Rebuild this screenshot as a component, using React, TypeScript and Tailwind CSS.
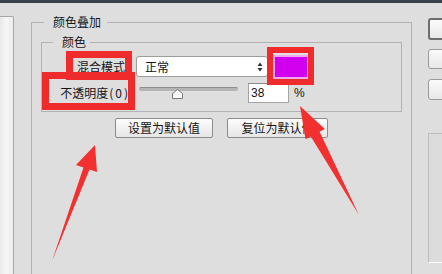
import React from "react";

function UpDown() {
  return (
    <svg width="6" height="10" viewBox="0 0 6 10">
      <path d="M3 0.5 L5.5 4 H0.5 Z M3 9.5 L5.5 6 H0.5 Z" fill="#333" />
    </svg>
  );
}

function Thumb() {
  return (
    <svg width="11" height="10" viewBox="0 0 11 10">
      <path d="M5.5 0.5 L10.5 4.5 V9.5 H0.5 V4.5 Z" fill="#fafafa" stroke="#7a7a7a" strokeWidth="1" />
    </svg>
  );
}

function Arrows() {
  return (
    <svg className="absolute inset-0" width="442" height="274" viewBox="0 0 442 274">
      <polygon
        points="95,145 97,172 89.5,169.5 52,261 83.5,167.5 76,165"
        fill="#f2302f"
      />
      <polygon
        points="300,106 324.9,128.9 319.6,131.7 359,215 310.8,136.5 305.5,139.3"
        fill="#f2302f"
      />
    </svg>
  );
}

export default function App() {
  return (
    <div className="relative w-[442px] h-[274px] overflow-hidden bg-[#dedede] font-['Noto_Sans_CJK_SC','Liberation_Sans',sans-serif] text-[12px] leading-[16px] text-[#151515]">
      <div className="h-[3px] bg-[#38404a]" />
      <div className="flex items-start">
        {/* left panel */}
        <div className="shrink-0 mt-[13px] w-[14px] h-[262px] rounded-tr-[2px] border-r border-t border-[#a8a8a8] bg-gradient-to-r from-[#e9e9e9] via-[#f6f6f6] to-[#ececec]" />

        {/* outer group */}
        <fieldset className="shrink-0 ml-[17px] mt-[11px] w-[381px] h-[290px] border border-[#b2b2b2]">
          <legend className="ml-[12px] pl-[9px] pr-[6px]">颜色叠加</legend>

          <fieldset className="mt-[4px] ml-[9px] w-[361px] border border-[#b2b2b2] pb-[8px]">
            <legend className="ml-[11px] pl-[9px] pr-[4px]">颜色</legend>

            {/* row 1 */}
            <div className="mt-[5px] flex h-[23px] items-center">
              <div className="w-[84px] pr-[1px] text-right">混合模式</div>
              <div className="ml-[10px] flex h-[21px] w-[132px] items-center justify-between rounded-[3px] border border-[#9c9c9c] bg-white pl-[8px] pr-[4px]">
                <span>正常</span>
                <UpDown />
              </div>
              <div className="ml-[5px] h-[24px] w-[36px] border-2 border-[#f2a6ee] bg-[#d000ee]" />
            </div>

            {/* row 2 */}
            <div className="mt-[5px] flex h-[20px] items-center">
              <div className="w-[86px] whitespace-nowrap text-right">
                不透明度<span className="ml-[1px] tracking-[2px]">(0</span>)
              </div>
              <div className="relative ml-[11px] h-[20px] w-[99px]">
                <div className="absolute left-0 right-0 top-[4px] h-[4px] rounded-full border-t border-[#8e8e8e] bg-[#b5b5b5]" />
                <div className="absolute left-[33px] top-[6px] leading-none">
                  <Thumb />
                </div>
              </div>
              <div className="ml-[10px] flex h-[20px] w-[41px] items-center border border-[#a4a4a4] border-t-[#8a8a8a] bg-white pl-[2px] font-['Liberation_Sans',sans-serif]">
                38
              </div>
              <div className="ml-[5px] font-['Liberation_Sans',sans-serif]">%</div>
            </div>
          </fieldset>

          {/* buttons */}
          <div className="mt-[6px] flex">
            <div className="ml-[83px] flex h-[20px] w-[98px] items-center justify-center rounded-[2px] border border-[#8c8c8c] bg-gradient-to-b from-[#fdfdfd] to-[#e6e6e6]">
              设置为默认值
            </div>
            <div className="ml-[14px] flex h-[20px] w-[101px] items-center justify-center rounded-[2px] border border-[#8c8c8c] bg-gradient-to-b from-[#fdfdfd] to-[#e6e6e6]">
              复位为默认值
            </div>
          </div>
        </fieldset>

        {/* right column */}
        <div className="ml-[16px] mt-[15px] flex w-[80px] shrink-0 flex-col">
          <div className="h-[22px] rounded-[3px] border-2 border-[#6e6e6e] bg-gradient-to-b from-[#fbfbfb] to-[#e8e8e8]" />
          <div className="mt-[9px] h-[20px] rounded-[3px] border border-[#9a9a9a] bg-gradient-to-b from-[#fbfbfb] to-[#e8e8e8]" />
          <div className="mt-[10px] h-[21px] rounded-[3px] border border-[#9a9a9a] bg-gradient-to-b from-[#fbfbfb] to-[#e8e8e8]" />
          <div className="mt-[33px] h-[130px] border border-[#bdbdbd] border-b-white bg-[#dcdcdc]" />
        </div>
      </div>

      {/* annotations */}
      <div className="pointer-events-none absolute inset-0">
        <div className="absolute left-[66px] top-[51px] h-[29px] w-[66px] border-[7px] border-[#ef2b2b]" />
        <div className="absolute left-[42px] top-[72px] h-[38px] w-[93px] border-[7px] border-[#ef2b2b]" />
        <div className="absolute left-[267px] top-[47px] h-[38px] w-[47px] border-[6px] border-[#ef2b2b]" />
        <Arrows />
      </div>
    </div>
  );
}
